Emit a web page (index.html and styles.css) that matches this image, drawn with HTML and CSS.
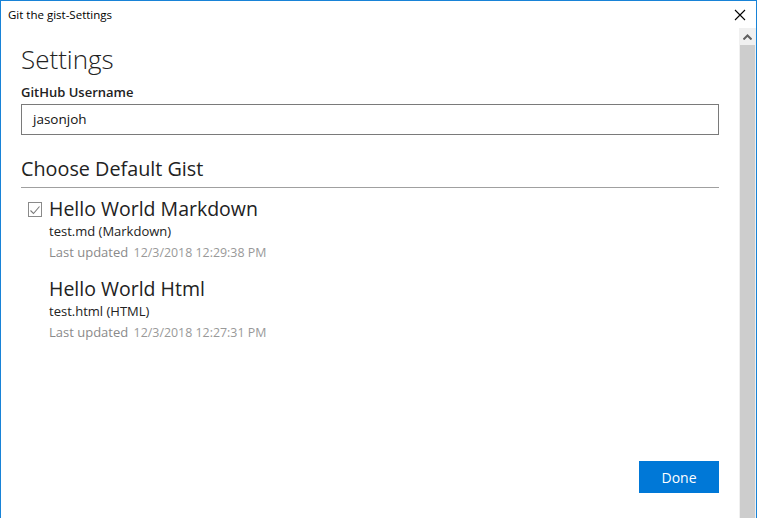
FILE: index.html
```html
<!DOCTYPE html>
<html>
<head>
<meta charset="utf-8">
<link rel="stylesheet" href="styles.css">
</head>
<body>
<div class="window">
  <div class="titlebar">
    <span class="title">Git the gist-Settings</span>
    <span class="close">
      <svg width="12" height="12" viewBox="0 0 12 12"><path d="M1 1L11 11M11 1L1 11" stroke="#000" stroke-width="1.1" fill="none"/></svg>
    </span>
  </div>
  <div class="main">
    <div class="content">
      <h1 class="heading">Settings</h1>
      <label class="field-label">GitHub Username</label>
      <div class="input">jasonjoh</div>
      <h2 class="section">Choose Default Gist</h2>
      <div class="list">
        <div class="item">
          <span class="check checked">
            <svg width="12" height="12" viewBox="0 0 12 12"><path d="M1.5 6.5L4.5 9.5L10.5 2.5" stroke="#7a7a7a" stroke-width="1.1" fill="none"/></svg>
          </span>
          <div class="item-text">
            <div class="item-title">Hello World Markdown</div>
            <div class="item-file">test.md (Markdown)</div>
            <div class="item-date"><span>Last updated</span> <span class="stamp">12/3/2018 12:29:38 PM</span></div>
          </div>
        </div>
        <div class="item">
          <span class="check blank"></span>
          <div class="item-text">
            <div class="item-title">Hello World Html</div>
            <div class="item-file">test.html (HTML)</div>
            <div class="item-date"><span>Last updated</span> <span class="stamp">12/3/2018 12:27:31 PM</span></div>
          </div>
        </div>
      </div>
      <div class="actions">
        <button class="done">Done</button>
      </div>
    </div>
    <div class="scrollbar">
      <div class="arrow">
        <svg width="9" height="6" viewBox="0 0 9 6"><path d="M0.5 5.5L4.5 1.5L8.5 5.5" stroke="#606060" stroke-width="2" fill="none"/></svg>
      </div>
      <div class="thumb"></div>
    </div>
  </div>
</div>
</body>
</html>
```
FILE: styles.css
```css
html, body {
  margin: 0;
  padding: 0;
  background: #fff;
}
.window {
  width: 757px;
  height: 518px;
  box-sizing: border-box;
  border: 1px solid #1883d7;
  border-bottom: none;
  display: flex;
  flex-direction: column;
  font-family: "Open Sans", "Noto Sans", sans-serif;
  color: #000;
}
.titlebar {
  height: 27px;
  display: flex;
  align-items: center;
  justify-content: space-between;
  padding-left: 7px;
  flex: none;
}
.title {
  font-size: 11.5px;
  margin-top: -1px;
}
.close {
  width: 32px;
  display: flex;
  justify-content: center;
  padding-right: 0;
}
.main {
  flex: 1;
  display: flex;
  min-height: 0;
}
.content {
  flex: 1;
  display: flex;
  flex-direction: column;
  padding: 0 20px 0 20px;
}
.heading {
  font-weight: 300;
  font-size: 26px;
  margin: 13px 0 6px 0;
  line-height: 36px;
  color: #222;
}
.field-label {
  font-size: 13px;
  font-weight: 600;
  line-height: 18px;
  color: #222;
}
.input {
  margin-top: 3px;
  height: 31px;
  box-sizing: border-box;
  border: 1px solid #7a7a7a;
  padding: 0 11px;
  font-size: 13.5px;
  line-height: 29px;
  color: #111;
}
.section {
  font-weight: 400;
  font-size: 19.8px;
  margin: 20px 0 0 0;
  line-height: 28px;
  padding-bottom: 4px;
  border-bottom: 1px solid #a0a0a0;
  color: #222;
}
.list {
  display: flex;
  flex-direction: column;
  gap: 12px;
  margin-top: 8px;
}
.item {
  display: flex;
  align-items: flex-start;
}
.check {
  width: 14px;
  height: 15px;
  box-sizing: border-box;
  margin: 6px 7px 0 7px;
  display: flex;
  align-items: center;
  justify-content: center;
  flex: none;
}
.check.checked {
  border: 1px solid #8a8a8a;
}
.item-title {
  font-size: 19.5px;
  line-height: 26px;
  color: #222;
}
.item-file {
  font-size: 13px;
  line-height: 19px;
  color: #222;
}
.item-date {
  font-size: 13px;
  line-height: 22px;
  color: #8a8a8a;
}
.stamp {
  margin-left: 2px;
  font-size: 12.4px;
  color: #999;
}
.actions {
  margin-top: auto;
  display: flex;
  justify-content: flex-end;
  padding-bottom: 25px;
}
.done {
  width: 80px;
  height: 32px;
  border: none;
  background: #0078d7;
  color: #fff;
  font-family: "Open Sans", "Noto Sans", sans-serif;
  font-size: 14px;
  padding: 0;
}
.scrollbar {
  width: 17px;
  flex: none;
  display: flex;
  flex-direction: column;
  background: #f0f0f0;
}
.arrow {
  height: 17px;
  display: flex;
  align-items: center;
  justify-content: center;
  background: #f0f0f0;
}
.thumb {
  flex: 1;
  margin: 0 1px;
  background: #cdcdcd;
}
```
